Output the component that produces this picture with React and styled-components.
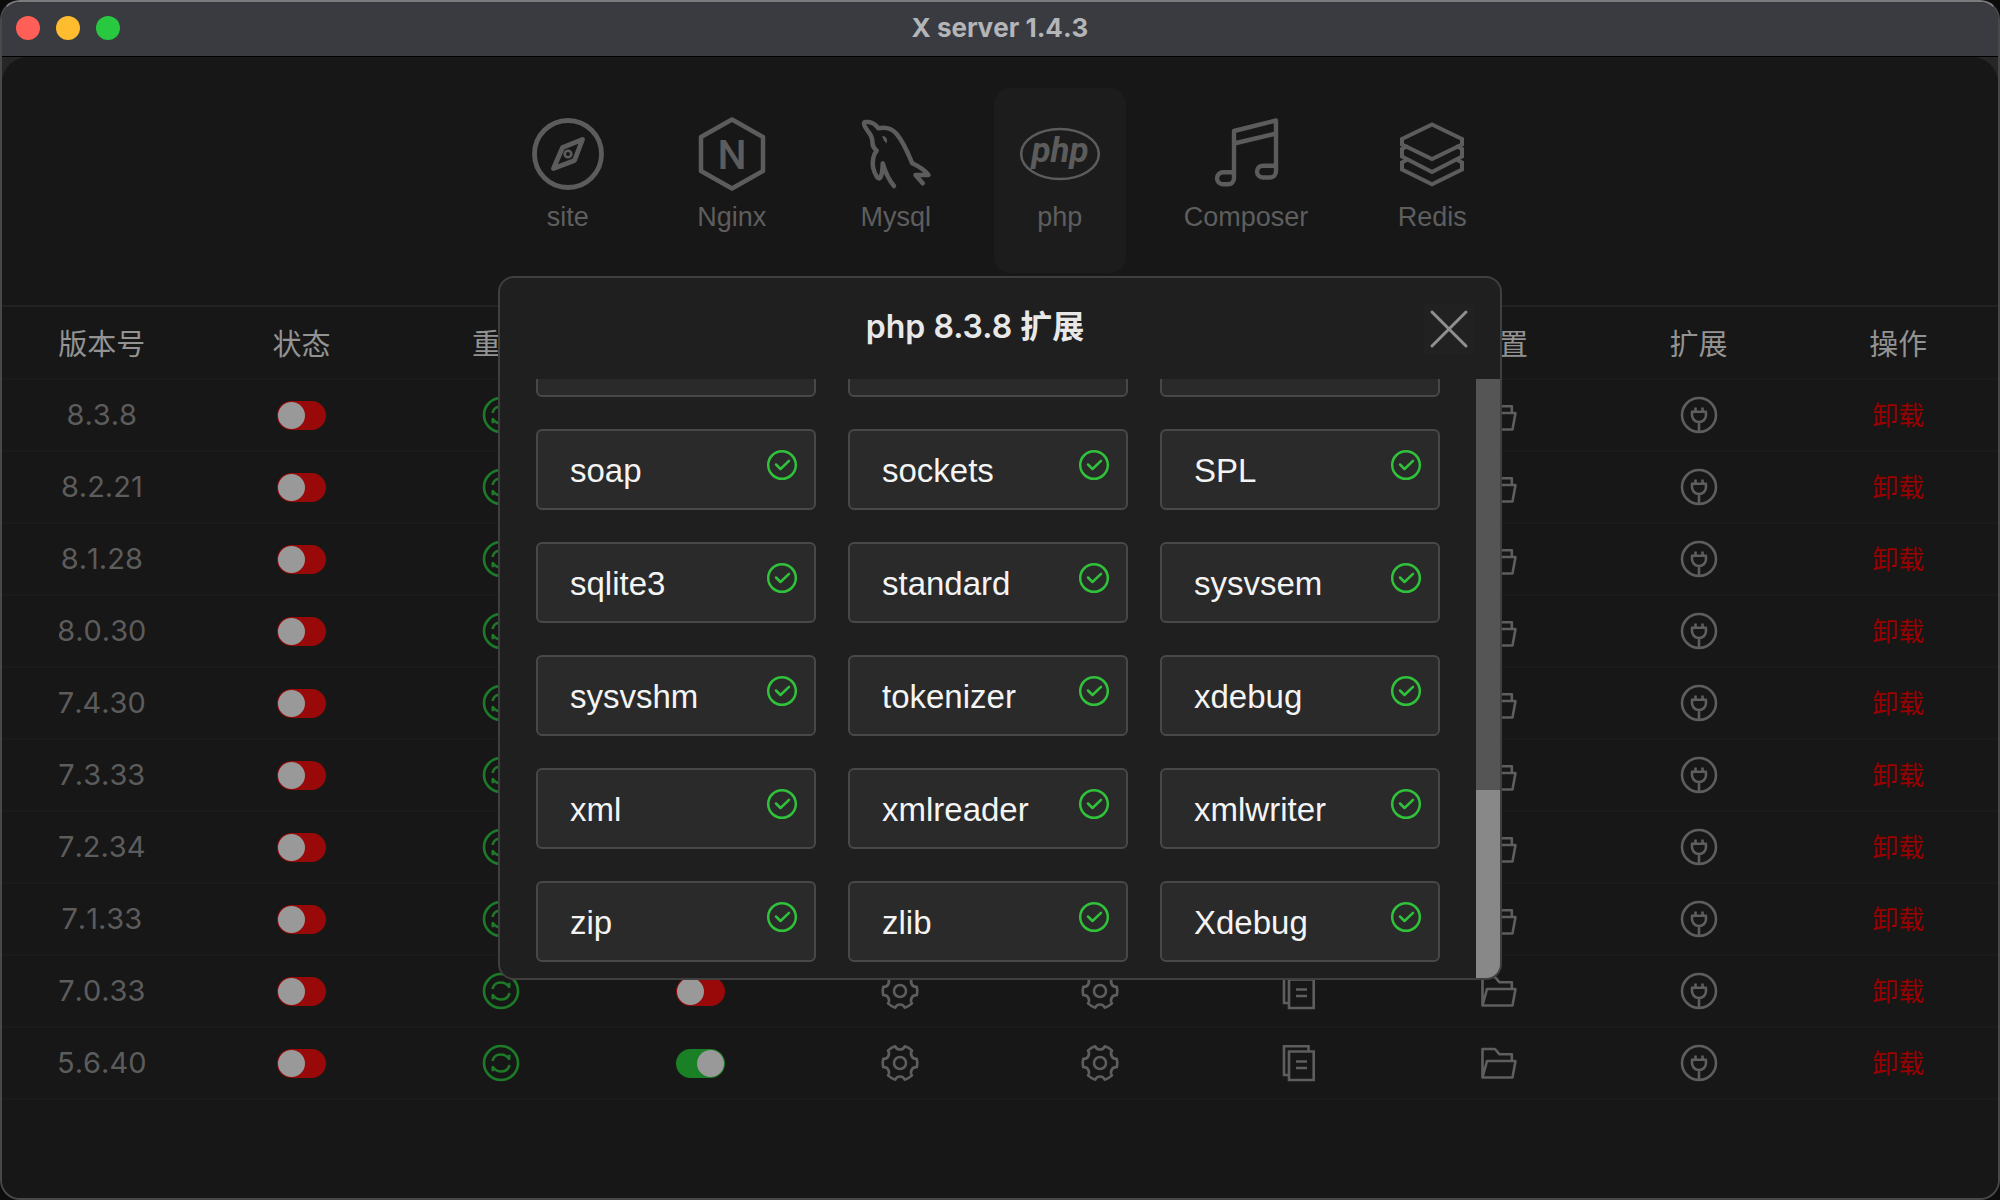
import { useState } from 'react';
import styled, { createGlobalStyle } from 'styled-components';

//Data
const versions = ['8.3.8', '8.2.21', '8.1.28', '8.0.30', '7.4.30', '7.3.33', '7.2.34', '7.1.33', '7.0.33', '5.6.40'];

const headings = ['版本号', '状态', '重启', '', '', '', '', '位置', '扩展', '操作'];

const extensions = [
    '', '', '',
    'soap', 'sockets', 'SPL',
    'sqlite3', 'standard', 'sysvsem',
    'sysvshm', 'tokenizer', 'xdebug',
    'xml', 'xmlreader', 'xmlwriter',
    'zip', 'zlib', 'Xdebug',
];

//Icons of the top menu
const SiteIcon = () => (
    <MenuIcon viewBox="0 0 80 80" strokeWidth="4.8">
        <circle cx="40" cy="40" r="33.5" />
        <path d="M54.5 25.5L34.5 33.5L25.5 54.5L46.5 46.5Z" />
        <circle cx="40" cy="40" r="3.3" strokeWidth="2.6" />
    </MenuIcon>
);

const NginxIcon = () => (
    <MenuIcon viewBox="0 0 80 80" strokeWidth="4.5">
        <path d="M40 5.5L71 23V57L40 74.5L9 57V23Z" />
        <text x="40" y="55" fontSize="41" fontWeight="500" textAnchor="middle">N</text>
    </MenuIcon>
);

const MysqlIcon = () => (
    <MenuIcon viewBox="0 0 80 80" strokeWidth="4.5">
        <path d="M38 72C33 66 29 57 26.7 49.3C26.5 56 26.5 60 24.5 63.3C23.5 65 22 64.5 21 63C16.5 56 16 50 17.3 44C18 40.5 19 38.5 20.7 36.7C17.5 34 16.5 32 16.5 29C16.5 24 15 21 12.5 18C9.5 14 8 12 8 9.8C8 7.5 10.5 7.8 12.5 8C17 8.5 20 11 22.3 14.3C29 13 36 14.5 40.7 20C47.5 28 52 39 56.3 49.3C62 52 69 56 72.5 61H59.5L66.7 69.3" />
        <path d="M26 22C30 22 32 25 30.5 29.5L28 26.5Z" fill="currentColor" stroke="none" />
    </MenuIcon>
);

const PhpIcon = () => (
    <MenuIcon viewBox="0 0 80 80" strokeWidth="2.5">
        <ellipse cx="40" cy="40" rx="38.8" ry="25" />
        <text x="40" y="48" fontSize="35" fontWeight="700" fontStyle="italic" textAnchor="middle">php</text>
    </MenuIcon>
);

const ComposerIcon = () => (
    <MenuIcon viewBox="0 0 80 80" strokeWidth="4.4">
        <path d="M28 58V17L70 6.5V57C70 61 67.5 63.5 64 63.5H57C53.5 63.5 51 61 51 57.5S53.5 51.7 57 51.7H70" />
        <path d="M28 29.5L70 19.5M28 58.3H17.5C13.5 58.3 11 61 11 64.3S13.5 70.2 17 70.2H22C25.5 70.2 28 68 28 64Z" />
    </MenuIcon>
);

const RedisIcon = () => (
    <MenuIcon viewBox="0 0 80 80" strokeWidth="4" strokeLinejoin="miter">
        <path d="M40 10.5L70 25V30.5L40 45L10 30.5V25Z" />
        <path d="M14.5 32.5L10 35V42.5L40 58L70 42.5V35L65.5 32.5" />
        <path d="M14.5 46L10 48.5V55.5L40 70.2L70 55.5V48.5L65.5 46" />
    </MenuIcon>
);

//Icons of the table rows
const RestartIcon = () => (
    <RowIcon viewBox="0 0 40 40">
        <circle cx="20" cy="20" r="17" />
        <path d="M11.5 18C12.3 14 15.5 11.5 20 11.5C23.5 11.5 26 13 28.2 16V11.8M28.5 22C27.7 26 24.5 28.5 20 28.5C16.5 28.5 14 27 11.8 24V28.2" />
    </RowIcon>
);

//Six lobes, each one followed by a round notch
const gearPath = () => {
    const point = (deg) => {
        const rad = (deg * Math.PI) / 180;
        return `${(20 + 17.3 * Math.cos(rad)).toFixed(2)} ${(20 + 17.3 * Math.sin(rad)).toFixed(2)}`;
    };
    let d = `M${point(-14)}`;
    for (let i = 0; i < 6; i++) {
        d += `A17.3 17.3 0 0 1 ${point(i * 60 + 14)}A5.2 5.2 0 0 0 ${point(i * 60 + 46)}`;
    }
    return d + 'Z';
};

const GearIcon = () => (
    <RowIcon viewBox="0 0 40 40">
        <path d={gearPath()} />
        <circle cx="20" cy="20" r="6" />
    </RowIcon>
);

const LogIcon = () => (
    <RowIcon viewBox="0 0 40 40" strokeLinejoin="miter">
        <path d="M10 8.5H34.7V37H10ZM10 32H5V3.2H29.5V8.5M17 18.5H28M17 25H28" />
    </RowIcon>
);

const FolderIcon = () => (
    <RowIcon viewBox="0 0 40 40">
        <path d="M3.5 34.5V6H16L20.5 11.3H32.8V18M3.5 34.5L8 18H36.5L33.5 34.5Z" />
    </RowIcon>
);

const PlugIcon = () => (
    <RowIcon viewBox="0 0 40 40">
        <circle cx="20" cy="20" r="17" />
        <path d="M12 16.8H28M16.5 12.5V16.8M23.5 12.5V16.8M13 17V20C13 24 16 27 20 27S27 24 27 20V17M20 27V37" />
    </RowIcon>
);

const menu = [
    { name: 'site', icon: SiteIcon },
    { name: 'Nginx', icon: NginxIcon },
    { name: 'Mysql', icon: MysqlIcon },
    { name: 'php', icon: PhpIcon },
    { name: 'Composer', icon: ComposerIcon },
    { name: 'Redis', icon: RedisIcon },
];

const VersionRow = ({ version, isDefault }) => {
    const [running, setRunning] = useState(false);
    const [checked, setChecked] = useState(isDefault);

    return (
        <tr>
            <td>{version}</td>
            <td><Switch aria-label={`${version} 状态`} checked={running} onChange={() => setRunning(!running)} /></td>
            <td><IconButton $green aria-label="重启"><RestartIcon /></IconButton></td>
            <td><Switch aria-label={`${version} 默认`} checked={checked} onChange={() => setChecked(!checked)} /></td>
            <td><IconButton aria-label="设置"><GearIcon /></IconButton></td>
            <td><IconButton aria-label="配置"><GearIcon /></IconButton></td>
            <td><IconButton aria-label="日志"><LogIcon /></IconButton></td>
            <td><IconButton aria-label="位置"><FolderIcon /></IconButton></td>
            <td><IconButton aria-label="扩展"><PlugIcon /></IconButton></td>
            <td><RemoveButton>卸载</RemoveButton></td>
        </tr>
    );
};

const ExtensionDialog = ({ onClose }) => (
    <Overlay>
        <Dialog role="dialog" aria-labelledby="dialog-title">
            <DialogHeader>
                <h2 id="dialog-title">php 8.3.8 扩展</h2>
                <CloseButton aria-label="关闭" onClick={onClose}>
                    <svg viewBox="0 0 50 50"><path d="M8 8L42 42M42 8L8 42" /></svg>
                </CloseButton>
            </DialogHeader>
            <DialogBody>
                <ExtensionList>
                    {extensions.map((name, index) => (
                        <Extension key={index}>
                            {name && (
                                <>
                                    <span>{name}</span>
                                    <svg viewBox="0 0 32 32">
                                        <circle cx="16" cy="16" r="13.8" />
                                        <path d="M10 15.5L14.5 20L23 11.8" />
                                    </svg>
                                </>
                            )}
                        </Extension>
                    ))}
                </ExtensionList>
                <ScrollTrack><ScrollThumb /></ScrollTrack>
            </DialogBody>
        </Dialog>
    </Overlay>
);

const App = () => {
    const [active, setActive] = useState('php');
    const [open, setOpen] = useState(true);

    return (
        <>
            <GlobalStyle />
            <Window>
                <TitleBar>
                    <Lights>
                        <Light $color="#ff5f57" aria-label="close" />
                        <Light $color="#febc2e" aria-label="minimize" />
                        <Light $color="#28c840" aria-label="zoom" />
                    </Lights>
                    <h1>X server 1.4.3</h1>
                </TitleBar>
                <Content>
                    <Menu>
                        {menu.map(({ name, icon: Icon }) => (
                            <MenuItem key={name} $active={name === active} onClick={() => setActive(name)}>
                                <Icon />
                                <span>{name}</span>
                            </MenuItem>
                        ))}
                    </Menu>
                    <Table>
                        <thead>
                            <tr>{headings.map((text, index) => <th key={index}>{text}</th>)}</tr>
                        </thead>
                        <tbody>
                            {versions.map(version => (
                                <VersionRow key={version} version={version} isDefault={version === '5.6.40'} />
                            ))}
                        </tbody>
                    </Table>
                    {open && <ExtensionDialog onClose={() => setOpen(false)} />}
                </Content>
            </Window>
        </>
    );
};

const GlobalStyle = createGlobalStyle`
    *{
        box-sizing: border-box;
        margin: 0;
        padding: 0;
    }

    body{
        background: #0c0c0c;
        font-family: Inter, "Noto Sans CJK SC", sans-serif;
    }

    button{
        border: none;
        background: none;
        font-family: inherit;
        cursor: pointer;
    }
`;

const Window = styled.div`
    display: flex;
    flex-direction: column;
    min-height: 100vh;
    border: 2px solid #484848;
    border-top-color: #7b7b7e;
    border-radius: 20px;
    overflow: hidden;
    background: #262626;
`;

const TitleBar = styled.header`
    display: grid;
    grid-template-columns: 1fr auto 1fr;
    align-items: center;
    height: 55px;
    padding: 0 14px 2px;
    background: #3a3b40;
    border-bottom: 1px solid black;
    h1{
        font-size: 26px;
        line-height: 32px;
        font-weight: 700;
        font-kerning: none;
        color: #b4b5b8;
    }
`;

const Lights = styled.div`
    display: flex;
    gap: 16px;
`;

const Light = styled.button`
    width: 24px;
    height: 24px;
    border-radius: 50%;
    && {
        background: ${props => props.$color};
    }
`;

const Content = styled.main`
    flex: 1;
    position: relative;
    background: #171717;
    border-radius: 26px 26px 0 0;
`;

const Menu = styled.nav`
    display: flex;
    justify-content: center;
    gap: 32px;
    padding: 31px 0 32px;
    border-bottom: 2px solid #222222;
`;

const MenuItem = styled.button`
    display: flex;
    flex-direction: column;
    align-items: center;
    min-width: 131px;
    padding: 26px 25px 33px;
    padding-inline: 26px;
    border-radius: 16px;
    color: #5c5c5c;
    && {
        background: ${props => props.$active ? '#1c1c1c' : 'transparent'};
    }
    span{
        font-family: "Liberation Sans", sans-serif;
        font-size: 27px;
        line-height: 46px;
        color: #5e5e5e;
    }
`;

const MenuIcon = styled.svg.attrs(props => ({ strokeLinejoin: props.strokeLinejoin || 'round', strokeLinecap: 'round' }))`
    width: 80px;
    height: 80px;
    fill: none;
    stroke: currentColor;
    text{
        fill: currentColor;
        stroke: none;
        font-family: Roboto, sans-serif;
    }
`;

const Table = styled.table`
    width: 100%;
    table-layout: fixed;
    border-collapse: collapse;
    text-align: center;
    th, td{
        height: 72px;
        border-bottom: 2px solid #1b1b1b;
        font-size: 29px;
        line-height: 40px;
        vertical-align: middle;
    }
    th{
        padding-top: 4px;
        font-weight: 400;
        color: #939393;
    }
    td{
        color: #5c5c5c;
        font-kerning: none;
    }
`;

const Switch = styled.input.attrs({ type: 'checkbox', role: 'switch' })`
    appearance: none;
    display: flex;
    justify-content: ${props => props.checked ? 'flex-end' : 'flex-start'};
    width: 49px;
    height: 29px;
    margin: 0 auto;
    padding: 1px;
    border-radius: 15px;
    background: ${props => props.checked ? '#198026' : '#990909'};
    cursor: pointer;
    &::before{
        content: '';
        width: 27px;
        height: 27px;
        border-radius: 50%;
        background: #999999;
    }
`;

const IconButton = styled.button`
    display: block;
    margin: 0 auto;
    color: ${props => props.$green ? '#1d7a27' : '#5e5e5e'};
`;

const RowIcon = styled.svg.attrs(props => ({ strokeLinejoin: props.strokeLinejoin || 'round' }))`
    display: block;
    width: 40px;
    height: 40px;
    fill: none;
    stroke: currentColor;
    stroke-width: 2.6;
`;

const RemoveButton = styled.button`
    font-size: 26px;
    line-height: 36px;
    color: #990000;
`;

const Overlay = styled.div`
    position: absolute;
    inset: 0;
    display: flex;
    align-items: center;
    justify-content: center;
`;

const Dialog = styled.section`
    width: 1004px;
    max-width: 90%;
    border: 2px solid #3f3f3f;
    border-radius: 16px;
    overflow: hidden;
    background: #1f1f1f;
`;

const DialogHeader = styled.header`
    display: flex;
    align-items: flex-start;
    padding: 26px 26px 25px;
    h2{
        flex: 1;
        text-align: center;
        font-size: 32px;
        line-height: 46px;
        font-weight: 600;
        color: #e8e8e8;
    }
`;

const CloseButton = styled.button`
    && {
        background: #212121;
    }
    svg{
        display: block;
        width: 50px;
        height: 50px;
        stroke: #909090;
        stroke-width: 3;
        stroke-linecap: round;
    }
`;

const DialogBody = styled.div`
    display: flex;
    height: 599px;
`;

//Rows stay at the end of the list, the first ones are scrolled away
const ExtensionList = styled.ul`
    flex: 1;
    display: grid;
    grid-template-columns: repeat(3, 1fr);
    align-content: end;
    gap: 32px;
    padding: 0 36px 16px;
    overflow: hidden;
    list-style: none;
`;

const Extension = styled.li`
    display: flex;
    justify-content: space-between;
    height: 81px;
    padding: 18px 16px 16px 32px;
    background: #2a2a2a;
    border: 2px solid #484848;
    border-radius: 6px;
    span{
        font-family: "Liberation Sans", sans-serif;
        font-size: 33px;
        line-height: 43px;
        color: #f4f4f4;
    }
    svg{
        width: 32px;
        height: 32px;
        fill: none;
        stroke: #2fc23a;
        stroke-width: 2.5;
        stroke-linecap: round;
        stroke-linejoin: round;
    }
`;

const ScrollTrack = styled.div`
    display: flex;
    flex-direction: column;
    justify-content: flex-end;
    width: 24px;
    background: #555555;
`;

const ScrollThumb = styled.div`
    height: 188px;
    background: #888888;
`;

export default App;
